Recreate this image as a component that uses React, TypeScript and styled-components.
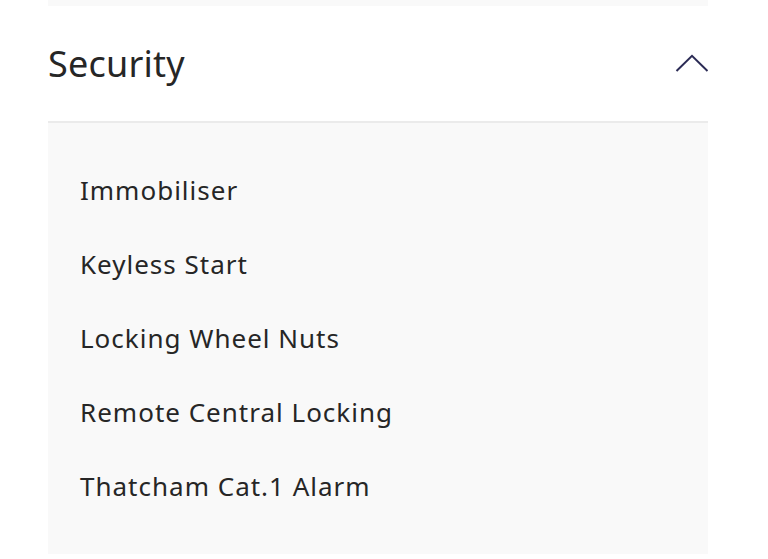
import React from "react";
import styled, { createGlobalStyle } from "styled-components";

const Global = createGlobalStyle`
  html, body { margin: 0; padding: 0; background: #ffffff; }
  body { font-family: "Noto Sans", "Open Sans", sans-serif; }
`;

const Page = styled.div`
  width: 768px;
  height: 559px;
  overflow: hidden;
  padding: 0 60px 0 48px;
  box-sizing: border-box;
`;

const TopStrip = styled.div`
  height: 6px;
  background: #f9f9f9;
`;

const Header = styled.button`
  all: unset;
  box-sizing: border-box;
  width: 100%;
  height: 117px;
  display: flex;
  align-items: center;
  justify-content: space-between;
  border-bottom: 2px solid #ebebeb;
  cursor: pointer;
`;

const Title = styled.h2`
  margin: 0;
  font-size: 36px;
  font-weight: 400;
  color: #262626;
  letter-spacing: 0.2px;
  line-height: 1;
`;

const Chevron = styled.svg`
  width: 34px;
  height: 20px;
  margin-right: -1px;
`;

const Content = styled.ul`
  list-style: none;
  margin: 0;
  padding: 30px 32px 31px;
  background: #f9f9f9;
`;

const Item = styled.li`
  height: 74px;
  line-height: 74px;
  font-size: 26px;
  color: #262626;
  letter-spacing: 1px;
`;

const items = [
  "Immobiliser",
  "Keyless Start",
  "Locking Wheel Nuts",
  "Remote Central Locking",
  "Thatcham Cat.1 Alarm",
];

export default function App() {
  return (
    <>
      <Global />
      <Page>
        <TopStrip />
        <Header>
          <Title>Security</Title>
          <Chevron viewBox="0 0 34 20" fill="none">
            <path d="M1.5 17 L17 1.8 L32.5 17" stroke="#2b2b55" strokeWidth="2" />
          </Chevron>
        </Header>
        <Content>
          {items.map((t) => (
            <Item key={t}>{t}</Item>
          ))}
        </Content>
      </Page>
    </>
  );
}
